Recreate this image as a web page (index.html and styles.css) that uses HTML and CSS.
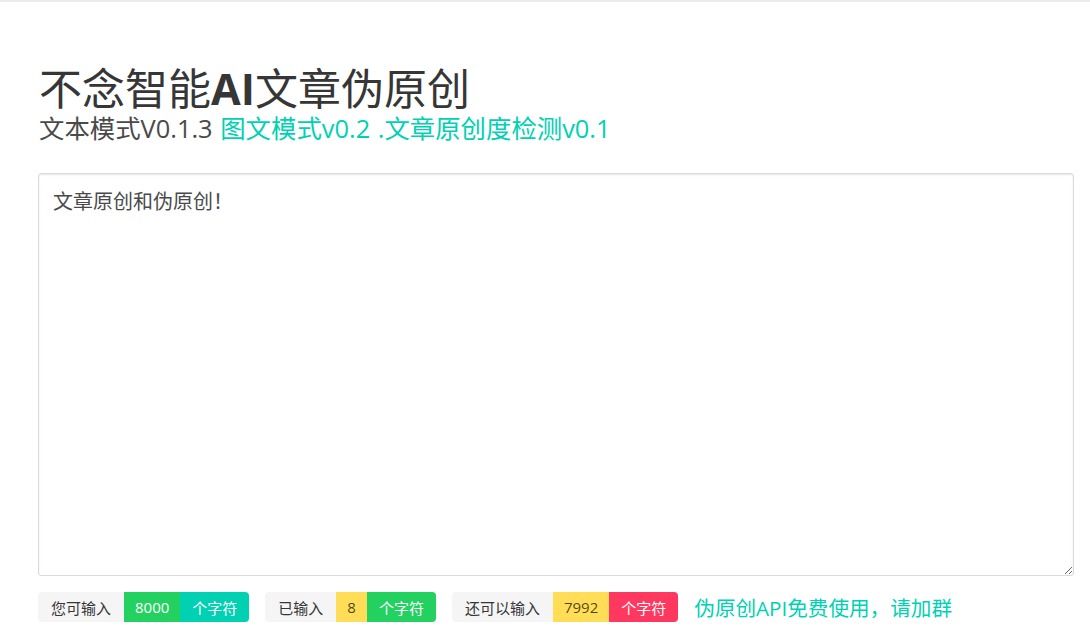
FILE: index.html
```html
<!DOCTYPE html>
<html lang="zh-CN">
<head>
<meta charset="utf-8">
<title>不念智能AI文章伪原创</title>
<link rel="stylesheet" href="styles.css">
</head>
<body>
<div class="topbar"></div>
<main class="page">
  <header class="hero">
    <h1 class="title">不念智能<b>AI</b>文章伪原创</h1>
    <h2 class="subtitle">文本模式V0.1.3 <a href="#">图文模式v0.2</a> <a href="#">.文章原创度检测v0.1</a></h2>
  </header>
  <textarea class="editor">文章原创和伪原创！</textarea>
  <div class="stats">
    <div class="tags">
      <span class="tag light">您可输入</span>
      <span class="tag success num">8000</span>
      <span class="tag primary">个字符</span>
    </div>
    <div class="tags">
      <span class="tag light">已输入</span>
      <span class="tag warning num">8</span>
      <span class="tag success">个字符</span>
    </div>
    <div class="tags">
      <span class="tag light">还可以输入</span>
      <span class="tag warning num">7992</span>
      <span class="tag danger">个字符</span>
    </div>
    <a class="api-link" href="#">伪原创API免费使用，请加群</a>
  </div>
</main>
</body>
</html>
```

FILE: styles.css
```css
html, body {
  margin: 0;
  padding: 0;
  background: #fff;
}
body {
  font-family: "Open Sans", "Noto Sans CJK SC", sans-serif;
  color: #4a4a4a;
}
.topbar {
  height: 2px;
  background: #ececec;
}
.page {
  padding: 62px 16px 0 38px;
  display: flex;
  flex-direction: column;
}
.hero {
  padding-left: 1px;
}
.title {
  margin: 0;
  font-size: 43px;
  line-height: 49px;
  font-weight: 400;
  color: #363636;
}
.title b {
  font-weight: 700;
}
.subtitle {
  margin: 0;
  font-size: 25.4px;
  line-height: 30px;
  font-weight: 400;
  color: #4a4a4a;
  word-spacing: 1px;
}
.subtitle a {
  color: #00d1b2;
  text-decoration: none;
}
.editor {
  margin-top: 30px;
  box-sizing: border-box;
  width: 100%;
  height: 403px;
  padding: 13px 14px;
  border: 1px solid #dbdbdb;
  border-radius: 3px;
  box-shadow: inset 0 1px 2px rgba(10, 10, 10, 0.1);
  font-family: "Open Sans", "Noto Sans CJK SC", sans-serif;
  font-size: 20px;
  line-height: 1.5;
  color: #4a4a4a;
  resize: vertical;
  outline: none;
}
.stats {
  margin-top: 16px;
  display: flex;
  align-items: center;
  gap: 16px;
}
.tags {
  display: flex;
}
.tag {
  display: inline-flex;
  align-items: center;
  height: 30px;
  padding: 0 12px;
  font-size: 15px;
  white-space: nowrap;
}
.tag.num {
  padding: 0 11px;
}
.tag:first-child {
  border-radius: 4px 0 0 4px;
  padding: 0 13px;
}
.tag:last-child {
  border-radius: 0 4px 4px 0;
}
.light { background: #f5f5f5; color: #363636; }
.success { background: #23d160; color: #fff; }
.primary { background: #00d1b2; color: #fff; }
.warning { background: #ffdd57; color: rgba(0, 0, 0, 0.7); }
.danger { background: #ff3860; color: #fff; }
.api-link {
  font-size: 20.6px;
  color: #00d1b2;
  text-decoration: none;
}
```
